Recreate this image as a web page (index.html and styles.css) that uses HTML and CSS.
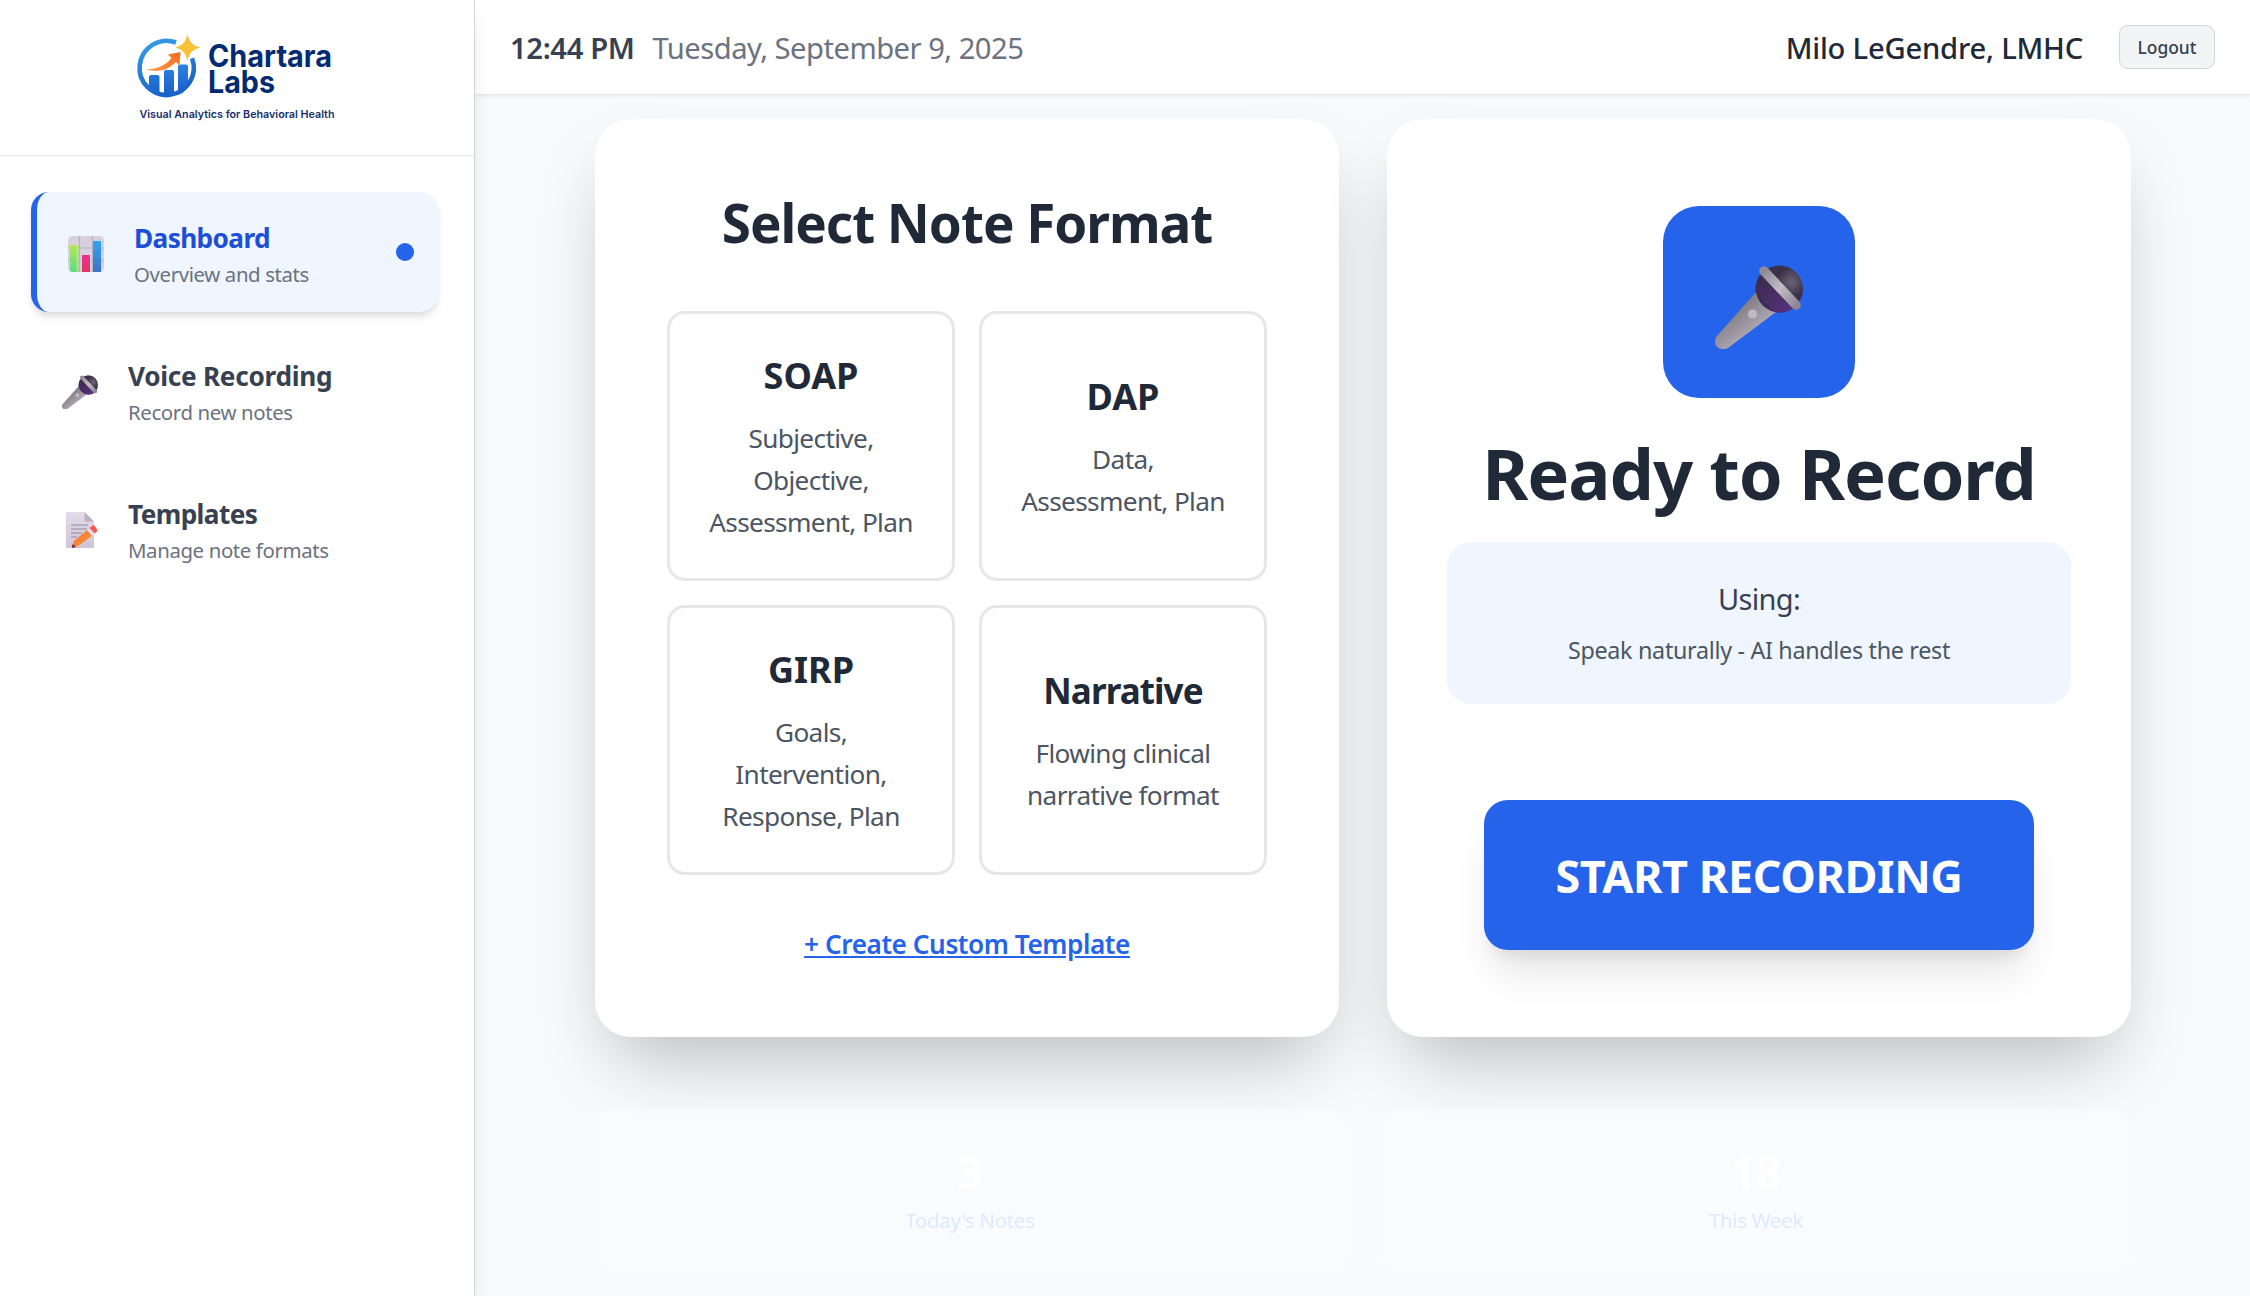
FILE: index.html
```html
<!DOCTYPE html>
<html lang="en">
<head>
<meta charset="utf-8">
<title>Chartara Labs</title>
<link rel="stylesheet" href="styles.css">
</head>
<body>
<svg width="0" height="0" class="defs" aria-hidden="true">
  <defs>
    <linearGradient id="handle" x1="0.3" y1="0.3" x2="0.6" y2="0.65"><stop offset="0" stop-color="#7f7a80"/><stop offset="1" stop-color="#a9a2b0"/></linearGradient>
    <radialGradient id="ball" cx="0.75" cy="0.35" r="0.7"><stop offset="0" stop-color="#6a6475"/><stop offset="0.45" stop-color="#3b3147"/><stop offset="1" stop-color="#3d2a55"/></radialGradient>
    <linearGradient id="neck" x1="0" y1="0" x2="0.7" y2="1"><stop offset="0" stop-color="#372b48"/><stop offset="1" stop-color="#553079"/></linearGradient>
    <linearGradient id="band" x1="0" y1="0" x2="1" y2="1"><stop offset="0" stop-color="#8f8a94"/><stop offset="0.5" stop-color="#c2bec6"/><stop offset="1" stop-color="#8f8796"/></linearGradient>
    <symbol id="mic" viewBox="0 0 88 84">
      <path d="M41 27 61 47 13 83C5 87-3 80 1 72Z" fill="url(#handle)"/>
      <circle cx="64.500" cy="24" r="23.500" fill="url(#ball)"/>
      <path d="M45 10C40 17 40 24 41 28L60 47C67 49 74 46 79 43Z" fill="url(#neck)"/>
      <path d="M49 6 81 40" stroke="url(#band)" stroke-width="9.500" stroke-linecap="round"/>
      <circle cx="37.500" cy="49" r="4.500" fill="#c0bac7"/>
    </symbol>
  </defs>
</svg>
<div class="app">
  <aside class="sidebar">
    <div class="brand">
      <svg width="200" height="92" viewBox="0 0 200 92" role="img" aria-label="Chartara Labs">
        <defs>
          <linearGradient id="ring" x1="0" y1="0" x2="0.4" y2="1"><stop offset="0" stop-color="#35a0e8"/><stop offset="1" stop-color="#1c63c9"/></linearGradient>
          <linearGradient id="bars" x1="0" y1="0" x2="0" y2="1"><stop offset="0" stop-color="#2d83e0"/><stop offset="1" stop-color="#1a5fc8"/></linearGradient>
          <linearGradient id="arrow" x1="0" y1="1" x2="1" y2="0"><stop offset="0" stop-color="#ff9a4d"/><stop offset="1" stop-color="#f96a1c"/></linearGradient>
        </defs>
        <path d="M11 54V43Q11 41 13 41H19.500Q21.500 41 21.500 43V60ZM26 61V38Q26 36 28 36H34Q36 36 36 38V61ZM40 60V32.500Q40 30.500 42 30.500H48Q50 30.500 50 32.500V52Z" fill="url(#bars)"/>
        <path d="M38 8.500A27.100 27.100 0 1 0 54 24.300" fill="none" stroke="url(#ring)" stroke-width="4.600"/>
        <path d="M8 35.500C20 35 28 31 33.500 24L30 20.500 42.500 18 41.500 31.500 38 28C30 36 21 39 8 35.500Z" fill="url(#arrow)"/>
        <path d="M49.500 0C51.500 8.500 54 11 62.500 13.500 54 16 51.500 18.500 49.500 27 47.500 18.500 45 16 37.500 13.500 45 11 47.500 8.500 49.500 0Z" fill="#fbc239"/>
        <text x="70" y="32.500" class="brand-name" textLength="124" lengthAdjust="spacingAndGlyphs">Chartara</text>
        <text x="70" y="58.500" class="brand-name" textLength="67" lengthAdjust="spacingAndGlyphs">Labs</text>
        <text x="1.500" y="84" class="brand-tag" textLength="195" lengthAdjust="spacingAndGlyphs">Visual Analytics for Behavioral Health</text>
      </svg>
    </div>
    <nav class="nav">
      <a class="nav-item active">
        <span class="nav-icon"><svg width="36" height="36" viewBox="0 0 36 36">
          <defs>
            <linearGradient id="g1" x1="0" y1="0" x2="0" y2="1"><stop offset="0" stop-color="#b5e655"/><stop offset="1" stop-color="#5fd98c"/></linearGradient>
            <linearGradient id="g2" x1="0" y1="0" x2="0" y2="1"><stop offset="0" stop-color="#e8308e"/><stop offset="1" stop-color="#dc3a63"/></linearGradient>
            <linearGradient id="g3" x1="0" y1="0" x2="0" y2="1"><stop offset="0" stop-color="#31a5ef"/><stop offset="1" stop-color="#3f72c6"/></linearGradient>
          </defs>
          <rect width="36" height="36" rx="4.500" fill="#d8d0de"/>
          <path d="M11.500 0V36M24.500 0V36M0 12H36M0 24.500H36" stroke="#bab1c2" stroke-width="1.200"/>
          <path d="M2 9H10.500V36H4Q2 36 2 34Z" fill="url(#g1)"/>
          <path d="M8.500 9H10.500V36H8.500Z" fill="#b9ee7a" opacity="0.700"/>
          <rect x="14" y="19" width="8" height="17" fill="url(#g2)"/>
          <rect x="25" y="5" width="8" height="31" fill="url(#g3)"/>
        </svg></span>
        <span class="nav-text"><span class="nav-title">Dashboard</span><span class="nav-sub">Overview and stats</span></span>
        <span class="nav-dot"></span>
      </a>
      <a class="nav-item">
        <span class="nav-icon"><svg width="36" height="34.500"><use href="#mic"/></svg></span>
        <span class="nav-text"><span class="nav-title voice">Voice Recording</span><span class="nav-sub">Record new notes</span></span>
      </a>
      <a class="nav-item">
        <span class="nav-icon memo"><svg width="32" height="36" viewBox="0 0 32 36">
          <defs>
            <linearGradient id="paper" x1="0" y1="0" x2="0" y2="1"><stop offset="0" stop-color="#e2dde8"/><stop offset="1" stop-color="#d0c3da"/></linearGradient>
            <linearGradient id="pencil" x1="0" y1="0" x2="1" y2="1"><stop offset="0" stop-color="#f4692f"/><stop offset="1" stop-color="#ffa13e"/></linearGradient>
          </defs>
          <path d="M1 0H18.500L28 9.500V35Q28 36 27 36H1Q0 36 0 35V1Q0 0 1 0Z" fill="url(#paper)"/>
          <path d="M18.500 0 28 9.500H20Q18.500 9.500 18.500 8Z" fill="#b9b0c2"/>
          <path d="M5 13H22M5 17H21M5 21H16M5 25H11" stroke="#908a99" stroke-width="1.100"/>
          <path d="M8 29 21 18 26 24 12 34 6 36Z" fill="url(#pencil)"/>
          <path d="M6.500 32 10 35 6 36Z" fill="#5b2b3c"/>
          <path d="M21 18 23.500 16 29 21.500 26 24Z" fill="#e4dbe9"/>
          <path d="M23.500 16 27 13.500Q28 13 29 14L31 17.500Q31.500 19 30.500 20L29 21.500Z" fill="#f8594f"/>
        </svg></span>
        <span class="nav-text"><span class="nav-title">Templates</span><span class="nav-sub">Manage note formats</span></span>
      </a>
    </nav>
  </aside>
  <div class="content">
    <header class="topbar">
      <div class="clock"><span class="time">12:44 PM</span><span class="date">Tuesday, September 9, 2025</span></div>
      <div class="account"><span class="user">Milo LeGendre, LMHC</span><button class="logout">Logout</button></div>
    </header>
    <main class="main">
      <div class="panels">
        <section class="card formats">
          <h2 class="formats-title">Select Note Format</h2>
          <div class="format-grid">
            <div class="format"><h3>SOAP</h3><p>Subjective,<br>Objective,<br>Assessment, Plan</p></div>
            <div class="format"><h3>DAP</h3><p>Data,<br>Assessment, Plan</p></div>
            <div class="format"><h3>GIRP</h3><p>Goals,<br>Intervention,<br>Response, Plan</p></div>
            <div class="format"><h3 class="mixed">Narrative</h3><p>Flowing clinical<br>narrative format</p></div>
          </div>
          <a class="custom">+ Create Custom Template</a>
        </section>
        <section class="card record">
          <div class="record-icon"><svg width="88" height="84"><use href="#mic"/></svg></div>
          <h1 class="record-title">Ready to Record</h1>
          <div class="using"><p class="using-label">Using:</p><p class="using-hint">Speak naturally - AI handles the rest</p></div>
          <button class="start">START RECORDING</button>
        </section>
      </div>
      <div class="stats">
        <div class="stat"><span class="stat-num">3</span><span class="stat-label">Today's Notes</span></div>
        <div class="stat"><span class="stat-num">18</span><span class="stat-label">This Week</span></div>
      </div>
    </main>
  </div>
</div>
</body>
</html>
```
FILE: styles.css
```css
* { box-sizing: border-box; margin: 0; padding: 0; }
body {
  font-family: "Noto Sans", "Open Sans", sans-serif;
  background: #f8fafc;
  color: #1f2937;
  overflow: hidden;
}
.defs { display: block; }
.app { display: grid; grid-template-columns: 475px 1fr; height: 1296px; }

.sidebar {
  background: #fff;
  border-right: 1px solid #d1d5db;
  box-shadow: 0 15px 22px -4px rgba(0, 0, 0, 0.1), 0 6px 9px -6px rgba(0, 0, 0, 0.1);
  z-index: 2;
}
.brand {
  height: 156px;
  padding: 34px 0 0 138px;
  border-bottom: 1px solid #e5e7eb;
}
.brand svg { display: block; overflow: visible; }
.brand-name { font: 700 31px Inter, sans-serif; fill: #032b71; }
.brand-tag { font: 600 11px Inter, sans-serif; fill: #152f6e; }

.nav { display: flex; flex-direction: column; gap: 18px; padding: 36px 36px 0 31px; }
.nav-item {
  display: flex;
  align-items: center;
  height: 120px;
  padding: 0 24px;
  border-radius: 18px;
}
.nav-item.active {
  background: #eff6ff;
  border-left: 6px solid #2563eb;
  box-shadow: 0 6px 9px -1.500px rgba(0, 0, 0, 0.1), 0 3px 6px -3px rgba(0, 0, 0, 0.1);
}
.nav-icon { width: 49px; margin-right: 24px; padding: 4px 0 0 7px; }
.nav-icon svg { display: block; }
.nav-icon.memo { padding-left: 11px; }
.nav-text { display: flex; flex-direction: column; flex: 1; padding-top: 2px; }
.nav-title {
  font-size: 26.200px;
  font-weight: 700;
  line-height: 42px;
  letter-spacing: -0.600px;
  color: #374151;
}
.nav-title.voice { letter-spacing: -0.280px; }
.active .nav-title { color: #1d4ed8; }
.nav-sub { font-size: 20.400px; line-height: 30px; letter-spacing: -0.380px; color: #6b7280; }
.nav-dot { width: 18px; height: 18px; border-radius: 50%; background: #2563eb; }

.content { display: flex; flex-direction: column; min-width: 0; }
.topbar {
  display: flex;
  align-items: center;
  justify-content: space-between;
  height: 95px;
  padding: 0 35px 0 35px;
  background: #fff;
  border-bottom: 1px solid #e5e7eb;
  box-shadow: 0 1.500px 3px rgba(0, 0, 0, 0.06);
}
.clock, .account { display: flex; align-items: center; }
.clock { font-size: 29.200px; gap: 18px; padding-top: 1px; }
.time { font-weight: 600; letter-spacing: -0.370px; color: #374151; }
.date { letter-spacing: -0.520px; color: #6b7280; }
.account { gap: 36px; }
.user { padding-top: 1px; font-size: 29.200px; font-weight: 500; letter-spacing: -0.220px; }
.logout {
  width: 96px;
  height: 44px;
  border: 1px solid #d1d5db;
  border-radius: 9px;
  background: #f3f4f6;
  color: #374151;
  font: 500 17.400px "Noto Sans", sans-serif;
}

.main { padding: 24px 119px 0 120px; }
.panels { display: grid; grid-template-columns: 1fr 1fr; gap: 48px; }
.card {
  height: 918px;
  border-radius: 36px;
  background: #fff;
  box-shadow: 0 37.500px 75px -18px rgba(0, 0, 0, 0.25);
  display: flex;
  flex-direction: column;
  align-items: center;
  text-align: center;
}
.formats { padding: 74px 72px 70px; }
.formats-title { font-size: 53px; line-height: 60px; letter-spacing: -1.050px; white-space: nowrap; }
.format-grid {
  display: grid;
  grid-template-columns: 1fr 1fr;
  grid-auto-rows: 270px;
  gap: 24px;
  width: 600px;
  margin: 58px 0 48px;
}
.format {
  display: flex;
  flex-direction: column;
  justify-content: center;
  gap: 17px;
  padding-top: 2px;
  border: 3px solid #e5e7eb;
  border-radius: 18px;
}
.format h3 { font-size: 36px; line-height: 48px; }
.format h3.mixed { font-size: 35px; letter-spacing: -0.900px; }
.format p { font-size: 26.200px; line-height: 42px; letter-spacing: -0.640px; color: #4b5563; }
.custom {
  font-size: 26.200px;
  line-height: 42px;
  font-weight: 600;
  letter-spacing: -0.440px;
  color: #2563eb;
  text-decoration: underline;
}

.record { padding: 87px 60px 0; }
.record-icon {
  display: flex;
  width: 192px;
  height: 192px;
  padding: 59px 0 0 52px;
  border-radius: 36px;
  background: #2563eb;
}
.record-title {
  margin: 39px 0 33px;
  font-size: 70.500px;
  line-height: 72px;
  letter-spacing: -1.100px;
  white-space: nowrap;
}
.using { width: 624px; height: 162px; padding-top: 36px; border-radius: 24px; background: #eff6ff; }
.using-label { font-size: 29px; line-height: 42px; letter-spacing: -0.700px; color: #374151; }
.using-hint { margin-top: 12px; font-size: 23.300px; line-height: 36px; letter-spacing: -0.300px; color: #4b5563; }
.start {
  width: 550px;
  height: 150px;
  margin-top: 96px;
  border: 0;
  border-radius: 24px;
  background: #2563eb;
  color: #fff;
  font: 700 45px "Noto Sans", sans-serif;
  letter-spacing: -0.420px;
  white-space: nowrap;
  box-shadow: 0 30px 38px -7.500px rgba(0, 0, 0, 0.1), 0 12px 15px -9px rgba(0, 0, 0, 0.1);
}

.stats { display: grid; grid-template-columns: 1fr 1fr; gap: 36px; margin-top: 72px; }
.stat {
  display: flex;
  flex-direction: column;
  align-items: center;
  gap: 6px;
  height: 162px;
  padding: 36px;
  border-radius: 18px;
  background: rgba(255, 255, 255, 0.3);
  backdrop-filter: blur(15px);
}
.stat-num { font-size: 45px; line-height: 54px; font-weight: 700; color: #fff; }
.stat-label { font-size: 20.400px; line-height: 30px; letter-spacing: -0.300px; color: #dbeafe; }
```
